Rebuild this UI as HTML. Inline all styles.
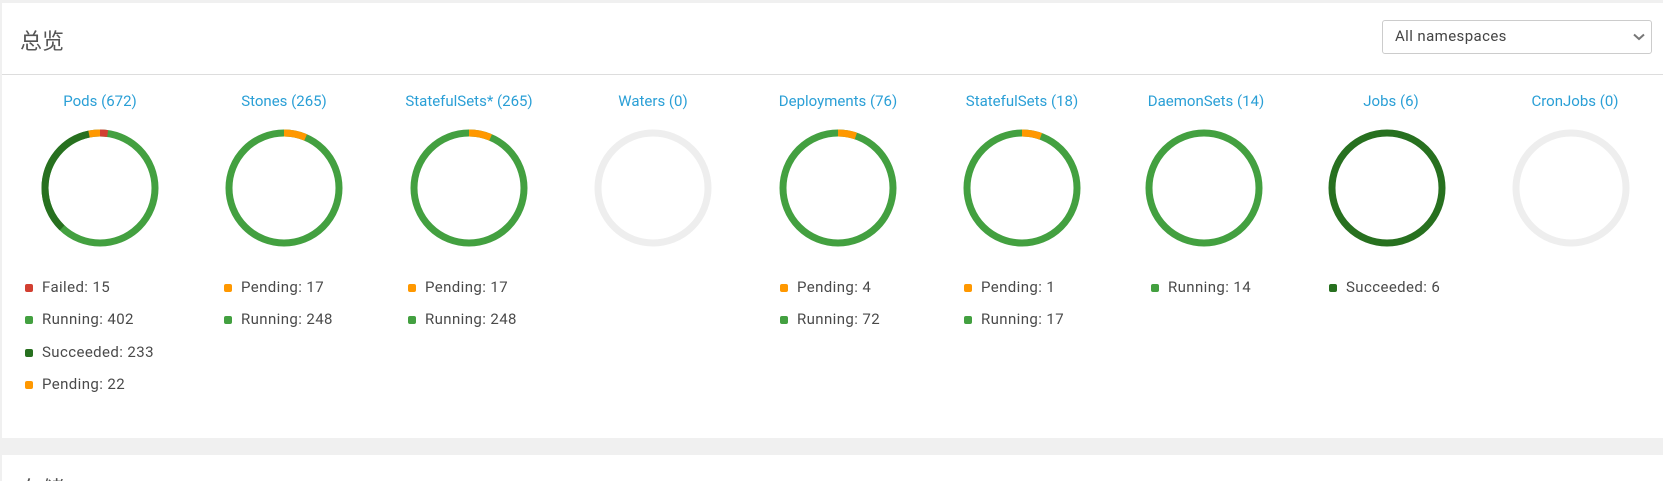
<!DOCTYPE html>
<html><head><meta charset="utf-8"><style>
html,body{margin:0;padding:0;background:#fff;font-family:"Roboto","Liberation Sans","Noto Sans CJK SC",sans-serif;}
#w{position:relative;width:1663px;height:481px;overflow:hidden;background:#f0f0f0;}
.card{position:absolute;left:2px;right:0;background:#fff;}
.t{position:absolute;color:#555;font-size:22px;}
.lbl{position:absolute;top:92px;width:184px;text-align:center;color:#2a9fd6;font-size:15px;}
.lg{position:absolute;font-size:15px;color:#4a4a4a;letter-spacing:0.4px;white-space:nowrap;}
.lg i{position:absolute;left:0;top:6px;width:8px;height:8px;border-radius:2px;}
.lg span{position:absolute;left:17px;top:0;}
svg{position:absolute;}
</style></head><body><div id="w">
<div class="card" style="top:3px;height:435px;"></div>
<div class="card" style="top:455px;height:40px;"></div>
<div style="position:absolute;left:2px;right:0;top:74px;height:1px;background:#ddd"></div>
<div class="t" style="left:20px;top:24px;">总览</div>
<div style="position:absolute;left:1382px;top:20px;width:268px;height:32px;border:1px solid #ccc;border-radius:3px;background:#fff;">
<div style="position:absolute;left:12px;top:6px;font-size:15px;color:#444;letter-spacing:0.4px;">All namespaces</div>
<svg style="left:250px;top:12px" width="12" height="8" viewBox="0 0 12 8"><path d="M1 1.5 L6 6 L11 1.5" fill="none" stroke="#777" stroke-width="2"/></svg>
</div>

<div class="lbl" style="left:8px">Pods (672)</div>
<div class="lbl" style="left:192px">Stones (265)</div>
<div class="lbl" style="left:377px">StatefulSets* (265)</div>
<div class="lbl" style="left:561px">Waters (0)</div>
<div class="lbl" style="left:746px">Deployments (76)</div>
<div class="lbl" style="left:930px">StatefulSets (18)</div>
<div class="lbl" style="left:1114px">DaemonSets (14)</div>
<div class="lbl" style="left:1299px">Jobs (6)</div>
<div class="lbl" style="left:1483px">CronJobs (0)</div>

<svg width="1663" height="481" style="left:0;top:0">
<g fill="none" stroke-width="7">
<g transform="translate(100,188) rotate(-90)">
<circle r="55" stroke="#43a040"/>
<circle r="55" stroke="#d23f31" stroke-dasharray="7.7 400"/>
<circle r="55" stroke="#27701f" stroke-dasharray="0 214.4 119.8 400"/>
<circle r="55" stroke="#ff9800" stroke-dasharray="0 334.2 11.4 400"/>
</g>
<g transform="translate(284,188) rotate(-90)"><circle r="55" stroke="#43a040"/><circle r="55" stroke="#ff9800" stroke-dasharray="22.2 400"/></g>
<g transform="translate(469,188) rotate(-90)"><circle r="55" stroke="#43a040"/><circle r="55" stroke="#ff9800" stroke-dasharray="22.2 400"/></g>
<circle cx="653" cy="188" r="55" stroke="#eeeeee"/>
<g transform="translate(838,188) rotate(-90)"><circle r="55" stroke="#43a040"/><circle r="55" stroke="#ff9800" stroke-dasharray="18.2 400"/></g>
<g transform="translate(1022,188) rotate(-90)"><circle r="55" stroke="#43a040"/><circle r="55" stroke="#ff9800" stroke-dasharray="19.2 400"/></g>
<circle cx="1204" cy="188" r="55" stroke="#43a040"/>
<circle cx="1387" cy="188" r="55" stroke="#27701f"/>
<circle cx="1571" cy="188" r="55" stroke="#eeeeee"/>
</g></svg>

<div class="lg" style="left:25px;top:278px"><i style="background:#d23f31"></i><span>Failed: 15</span></div>
<div class="lg" style="left:25px;top:310px"><i style="background:#43a040"></i><span>Running: 402</span></div>
<div class="lg" style="left:25px;top:343px"><i style="background:#27701f"></i><span>Succeeded: 233</span></div>
<div class="lg" style="left:25px;top:375px"><i style="background:#ff9800"></i><span>Pending: 22</span></div>

<div class="lg" style="left:224px;top:278px"><i style="background:#ff9800"></i><span>Pending: 17</span></div>
<div class="lg" style="left:224px;top:310px"><i style="background:#43a040"></i><span>Running: 248</span></div>

<div class="lg" style="left:408px;top:278px"><i style="background:#ff9800"></i><span>Pending: 17</span></div>
<div class="lg" style="left:408px;top:310px"><i style="background:#43a040"></i><span>Running: 248</span></div>

<div class="lg" style="left:780px;top:278px"><i style="background:#ff9800"></i><span>Pending: 4</span></div>
<div class="lg" style="left:780px;top:310px"><i style="background:#43a040"></i><span>Running: 72</span></div>

<div class="lg" style="left:964px;top:278px"><i style="background:#ff9800"></i><span>Pending: 1</span></div>
<div class="lg" style="left:964px;top:310px"><i style="background:#43a040"></i><span>Running: 17</span></div>

<div class="lg" style="left:1151px;top:278px"><i style="background:#43a040"></i><span>Running: 14</span></div>

<div class="lg" style="left:1329px;top:278px"><i style="background:#27701f"></i><span>Succeeded: 6</span></div>

<div class="t" style="left:20px;top:472px;">存储</div>
</div></body></html>
